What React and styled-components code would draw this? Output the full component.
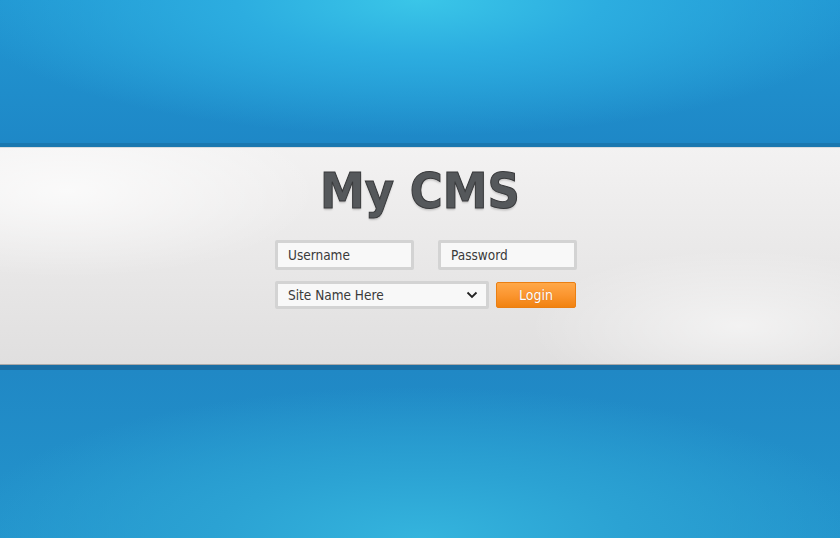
import styled, { createGlobalStyle } from "styled-components";

const Global = createGlobalStyle`
  html, body {
    margin: 0;
    padding: 0;
    height: 100%;
  }
  body {
    font-family: "DejaVu Sans Condensed", "DejaVu Sans", Verdana, sans-serif;
    background: #1f8ac9;
  }
`;

const Page = styled.div`
  width: 100vw;
  height: 100vh;
  display: flex;
  flex-direction: column;
  overflow: hidden;
`;

const Sky = styled.div`
  flex: ${(p) => (p.top ? "0 0 143px" : "1 1 auto")};
  background: ${(p) =>
    p.top
      ? `radial-gradient(ellipse 55% 95% at 50% 0%, #3ac6e8 0%, #2cade0 40%, rgba(31,137,202,0) 100%),
         linear-gradient(#2196d2, #1e88c7)`
      : `radial-gradient(ellipse 55% 90% at 50% 100%, #34b4dd 0%, #2ba2d3 45%, rgba(33,140,200,0) 100%),
         linear-gradient(#2088c5, #2394cc)`};
`;

const Band = styled.div`
  flex: 0 0 227px;
  box-sizing: border-box;
  border-top: 4px solid #1a78b0;
  border-bottom: 5px solid #1a6ea4;
  background:
    radial-gradient(ellipse 30% 40% at 8% 20%, rgba(255,255,255,0.7), rgba(255,255,255,0) 100%),
    radial-gradient(ellipse 25% 35% at 88% 82%, rgba(255,255,255,0.55), rgba(255,255,255,0) 100%),
    linear-gradient(#f3f2f2 0%, #ebeaea 40%, #e0dfdf 100%);
  box-shadow: inset 0 -1px 0 #a9a9a9, inset 0 1px 0 #d8dde0;
  display: flex;
  flex-direction: column;
  align-items: center;
  padding-top: 14px;
`;

const Title = styled.h1`
  margin: 0;
  font-family: "DejaVu Sans Condensed", "DejaVu Sans", sans-serif;
  font-weight: bold;
  font-size: 50px;
  line-height: 60px;
  color: #55585b;
  -webkit-text-stroke: 1px #38393b;
  text-shadow: 0 2px 2px rgba(0, 0, 0, 0.18);
`;

const Form = styled.form`
  margin-top: 19px;
  margin-left: 12px;
  width: 302px;
  display: flex;
  flex-direction: column;
  gap: 11px;
`;

const Row = styled.div`
  display: flex;
  align-items: center;
  justify-content: space-between;
`;

const Field = styled.div`
  box-sizing: border-box;
  width: ${(p) => p.w}px;
  height: ${(p) => p.h || 30}px;
  border: 3px solid #d3d3d3;
  border-radius: 2px;
  background: #f8f8f8;
  display: flex;
  align-items: center;
  padding: 0 10px;
  font-size: 13.5px;
  color: #3a3a3a;
`;

const Input = styled.input`
  border: none;
  outline: none;
  background: transparent;
  width: 100%;
  padding: 0;
  font-family: inherit;
  font-size: 13.5px;
  color: #3a3a3a;
  &::placeholder {
    color: #3a3a3a;
  }
`;

const SelectText = styled.span`
  flex: 1;
`;

const Chevron = styled.svg`
  width: 12px;
  height: 8px;
  margin-right: -2px;
`;

const Button = styled.button`
  box-sizing: border-box;
  width: 80px;
  height: 26px;
  margin-right: 1px;
  border: 1px solid #ea7f12;
  border-radius: 2px;
  background: linear-gradient(#ffa848 0%, #fb9630 50%, #f18210 100%);
  color: #fff;
  font-family: "DejaVu Sans Condensed", "DejaVu Sans", sans-serif;
  font-size: 14px;
  text-shadow: 0 0 1px rgba(160, 70, 0, 0.5);
  padding: 0;
  cursor: pointer;
`;

export default function App() {
  return (
    <Page>
      <Global />
      <Sky top />
      <Band>
        <Title>My CMS</Title>
        <Form onSubmit={(e) => e.preventDefault()}>
          <Row>
            <Field w={139}>
              <Input placeholder="Username" />
            </Field>
            <Field w={139}>
              <Input type="password" placeholder="Password" />
            </Field>
          </Row>
          <Row>
            <Field w={214} h={28}>
              <SelectText>Site Name Here</SelectText>
              <Chevron viewBox="0 0 12 8">
                <path d="M1.5 1.5 L6 6 L10.5 1.5" fill="none" stroke="#222" strokeWidth="1.8" />
              </Chevron>
            </Field>
            <Button type="submit">Login</Button>
          </Row>
        </Form>
      </Band>
      <Sky />
    </Page>
  );
}
